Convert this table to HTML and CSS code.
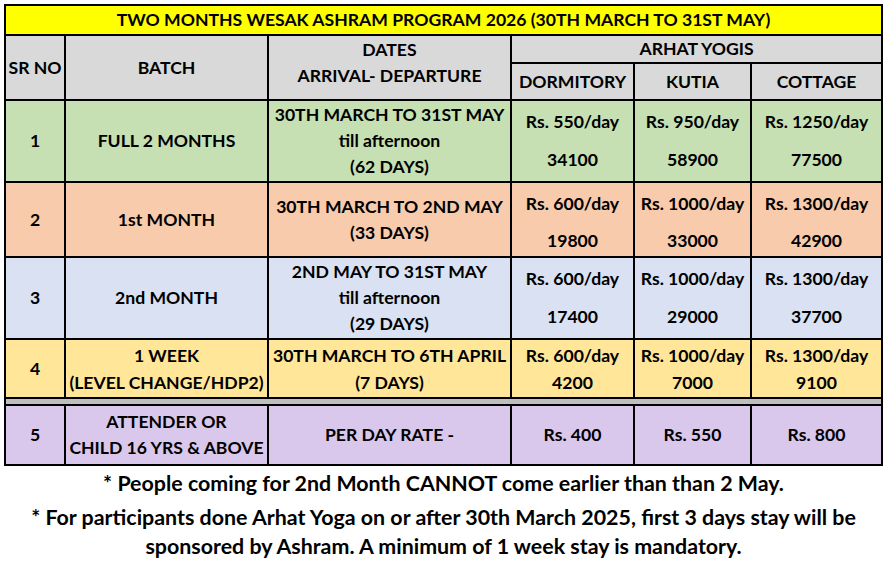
FILE: index.html
```html
<!DOCTYPE html>
<html>
<head>
<meta charset="utf-8">
<link rel="stylesheet" href="styles.css">
</head>
<body>
<table class="prog">
  <colgroup>
    <col class="c-sr"><col class="c-batch"><col class="c-dates"><col class="c-dorm"><col class="c-kutia"><col class="c-cottage">
  </colgroup>
  <tr class="r-title"><td colspan="6" class="title">TWO MONTHS WESAK ASHRAM PROGRAM 2026 (30TH MARCH TO 31ST MAY)</td></tr>
  <tr class="r-h1 head">
    <td rowspan="2">SR NO</td>
    <td rowspan="2">BATCH</td>
    <td rowspan="2" class="dates-head"><div class="lines"><span>DATES</span><span>ARRIVAL- DEPARTURE</span></div></td>
    <td colspan="3">ARHAT YOGIS</td>
  </tr>
  <tr class="r-h2 head">
    <td>DORMITORY</td><td>KUTIA</td><td>COTTAGE</td>
  </tr>
  <tr class="r1 green">
    <td>1</td><td>FULL 2 MONTHS</td>
    <td><div class="lines"><span>30TH MARCH TO 31ST MAY</span><span>till afternoon</span><span>(62 DAYS)</span></div></td>
    <td><div class="price tall"><span>Rs. 550/day</span><span>34100</span></div></td>
    <td><div class="price tall"><span>Rs. 950/day</span><span>58900</span></div></td>
    <td><div class="price tall"><span>Rs. 1250/day</span><span>77500</span></div></td>
  </tr>
  <tr class="r2 orange">
    <td>2</td><td>1st MONTH</td>
    <td><div class="lines"><span>30TH MARCH TO 2ND MAY</span><span>(33 DAYS)</span></div></td>
    <td><div class="price mid"><span>Rs. 600/day</span><span>19800</span></div></td>
    <td><div class="price mid"><span>Rs. 1000/day</span><span>33000</span></div></td>
    <td><div class="price mid"><span>Rs. 1300/day</span><span>42900</span></div></td>
  </tr>
  <tr class="r3 blue">
    <td>3</td><td>2nd MONTH</td>
    <td><div class="lines"><span>2ND MAY TO 31ST MAY</span><span>till afternoon</span><span>(29 DAYS)</span></div></td>
    <td><div class="price tall"><span>Rs. 600/day</span><span>17400</span></div></td>
    <td><div class="price tall"><span>Rs. 1000/day</span><span>29000</span></div></td>
    <td><div class="price tall"><span>Rs. 1300/day</span><span>37700</span></div></td>
  </tr>
  <tr class="r4 amber">
    <td>4</td>
    <td><div class="lines"><span>1 WEEK</span><span>(LEVEL CHANGE/HDP2)</span></div></td>
    <td><div class="lines"><span>30TH MARCH TO 6TH APRIL</span><span>(7 DAYS)</span></div></td>
    <td><div class="price"><span>Rs. 600/day</span><span>4200</span></div></td>
    <td><div class="price"><span>Rs. 1000/day</span><span>7000</span></div></td>
    <td><div class="price"><span>Rs. 1300/day</span><span>9100</span></div></td>
  </tr>
  <tr class="r-gap"><td colspan="6"></td></tr>
  <tr class="r5 purple">
    <td>5</td>
    <td><div class="lines"><span>ATTENDER OR</span><span>CHILD 16 YRS &amp; ABOVE</span></div></td>
    <td>PER DAY RATE -</td>
    <td>Rs. 400</td><td>Rs. 550</td><td>Rs. 800</td>
  </tr>
</table>
<div class="notes">
  <p class="note1">* People coming for 2nd Month CANNOT come earlier than than 2 May.</p>
  <p class="note2">* For participants done Arhat Yoga on or after 30th March 2025, first 3 days stay will be<br>sponsored by Ashram. A minimum of 1 week stay is mandatory.</p>
</div>
</body>
</html>
```

FILE: styles.css
```css
html, body {
  margin: 0;
  padding: 0;
  background: #ffffff;
}
body {
  padding: 4px 4px 0 4px;
  font-family: Lato, "Liberation Sans", sans-serif;
  font-weight: 700;
  color: #000;
}
.prog {
  border-collapse: collapse;
  table-layout: fixed;
  width: 879px;
  font-size: 17.6px;
}
.c-sr { width: 60px; }
.c-batch { width: 203px; }
.c-dates { width: 243px; }
.c-dorm { width: 123px; }
.c-kutia { width: 117px; }
.c-cottage { width: 131px; }
.prog td {
  border: 2px solid #000;
  text-align: center;
  vertical-align: middle;
  padding: 0;
  white-space: nowrap;
  line-height: 26px;
}
.r-title td { height: 28px; background: #ffff00; font-size: 17.6px; }
.r-h1 td { height: 24px; }
.r-h2 td { height: 35px; }
.head td { background: #d9d9d9; }
.prog td.dates-head { padding-bottom: 10px; }
.r1 td { height: 80px; }
.r2 td { height: 73px; }
.r3 td { height: 80px; }
.r4 td { height: 57px; }
.r4 .lines, .r4 .price { line-height: 27px; }
.r-gap td { height: 5px; background: #bfbfbf; line-height: 0; }
.r5 td { height: 58px; }
.green td { background: #c6e0b4; }
.orange td { background: #f8cbad; }
.blue td { background: #d9e1f2; }
.amber td { background: #ffe699; }
.purple td { background: #d9c7ec; }
.lines, .price {
  display: flex;
  flex-direction: column;
  align-items: center;
}
.price.tall { gap: 12px; }
.price.mid { gap: 11px; padding-top: 5px; }
.notes {
  width: 879px;
  text-align: center;
  font-size: 21.4px;
}
.notes p { margin: 0; }
.note1 { line-height: 30px; margin-top: 2px !important; }
.note2 { line-height: 29px; margin-top: 5px !important; }
```
